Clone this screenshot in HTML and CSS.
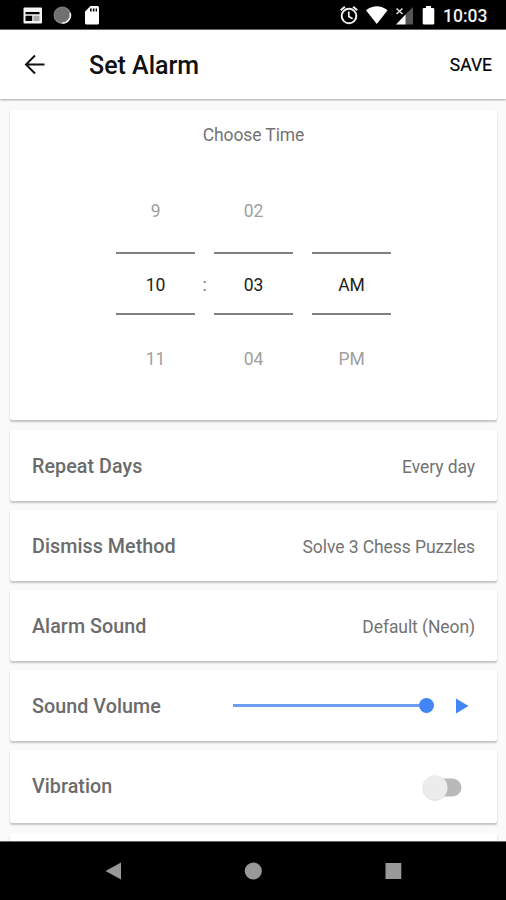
FILE: index.html
```html
<!DOCTYPE html>
<html lang="en">
<head>
<meta charset="utf-8">
<title>Set Alarm</title>
<link rel="stylesheet" href="styles.css">
</head>
<body>
<div class="status">
  <svg class="status-left" width="110" height="30" viewBox="0 0 110 30">
    <path fill="#f4f4f4" fill-rule="evenodd" d="M24.5 7.500H41q1 0 1 1v14q0 1-1 1H24.500q-1 0-1-1V8.500q0-1 1-1zM25.500 12v2.200h14v-2.200zM25.500 15.700v5.300h6.700v-5.300z"/>
    <path fill="#aaa" d="M33.500 15.700h6v5.300h-6z"/>
    <circle cx="62.300" cy="15.200" r="8.700" fill="#888"/>
    <path d="M70.200 13a8 8 0 0 1-8 10" fill="none" stroke="#eee" stroke-width="1.600"/>
    <circle cx="61.800" cy="14.700" r="7.500" fill="#707070"/>
    <path fill="#fff" fill-rule="evenodd" d="M90.500 6H97.500q1.500 0 1.500 1.500v15.500q0 1.500-1.500 1.500H86.500q-1.500 0-1.500-1.500V11.500zM90 8.500V11.500h1.600V8.500zM92.800 8.500V11.500h1.600V8.500zM95.600 8.500V11.500h1.400V8.500z"/>
  </svg>
  <svg class="status-right" width="106" height="30" viewBox="335 0 106 30">
    <g fill="none" stroke="#eee" stroke-width="2">
      <circle cx="349" cy="16" r="7.300"/>
      <path d="M348.800 11.500V16.500l3.800 2.300" stroke-width="1.700"/>
      <path d="M340.700 10.300l4.200-3.600M357.300 10.300l-4.200-3.600"/>
    </g>
    <path fill="#fff" d="M366 10.200Q376.800 2.500 387.600 10.200L376.800 24z"/>
    <path fill="#555" d="M413 7v17.500h-8V15z"/>
    <path fill="#fff" d="M405.500 14.500v10H396z"/>
    <path d="M396.500 8.500l6 5.500M402.500 8.500l-6 5.500" stroke="#ddd" stroke-width="1.600"/>
    <path fill="#fff" d="M426 6h5v2h2q1.300 0 1.300 1.300v13.900q0 1.300-1.300 1.300h-9q-1.300 0-1.300-1.300V9.300Q422.700 8 424 8h2z"/>
  </svg>
  <span class="clock">10:03</span>
</div>
<header class="appbar">
  <svg class="back" width="22" height="22" viewBox="0 0 22 22"><path d="M20.500 10.500H2.500M11 1.500L2 10.500l9 9" fill="none" stroke="#111" stroke-width="2"/></svg>
  <h1 class="title">Set Alarm</h1>
  <span class="save">SAVE</span>
</header>
<main class="content">
  <section class="card time">
    <h2 class="time-title">Choose Time</h2>
    <div class="picker">
      <div class="wheel"><span>9</span><span class="current">10</span><span>11</span></div>
      <div class="colon">:</div>
      <div class="wheel"><span>02</span><span class="current">03</span><span>04</span></div>
      <div class="gap"></div>
      <div class="wheel"><span></span><span class="current">AM</span><span>PM</span></div>
    </div>
  </section>
  <section class="card row"><span class="label">Repeat Days</span><span class="value">Every day</span></section>
  <section class="card row"><span class="label">Dismiss Method</span><span class="value">Solve 3 Chess Puzzles</span></section>
  <section class="card row"><span class="label">Alarm Sound</span><span class="value">Default (Neon)</span></section>
  <section class="card row"><span class="label">Sound Volume</span>
    <div class="volume-control">
      <div class="track"></div><div class="knob"></div>
      <svg class="play" width="13" height="16" viewBox="0 0 13 16"><path d="M0 .5l12.500 7.500L0 15.500z" fill="#4285f4"/></svg>
    </div>
  </section>
  <section class="card row last"><span class="label">Vibration</span>
    <svg class="switch" width="42" height="30" viewBox="0 0 42 30">
      <rect x="8" y="6.500" width="31.500" height="18" rx="9" fill="#b9b9b9"/>
      <circle cx="13" cy="16.200" r="12.500" fill="#ddd"/>
      <circle cx="13" cy="15.500" r="12.200" fill="#ececec"/>
    </svg>
  </section>
  <section class="card row"></section>
</main>
<nav class="nav">
  <svg width="506" height="58" viewBox="0 0 506 58" fill="#999">
    <path d="M105.500 29L121 20.500v17z"/>
    <circle cx="253.300" cy="29" r="8.600"/>
    <rect x="385.500" y="21" width="15.800" height="16"/>
  </svg>
</nav>
</body>
</html>
```
FILE: styles.css
```css
* { box-sizing: border-box; }
body {
  margin: 0;
  width: 506px;
  height: 900px;
  overflow: hidden;
  display: flex;
  flex-direction: column;
  background: #fafafa;
  font-family: Roboto, "Liberation Sans", sans-serif;
  color: #737373;
}
svg { display: block; flex: none; }
h1, h2 { margin: 0; }
.status {
  height: 30px;
  flex: none;
  display: flex;
  align-items: center;
  background: #000;
  border-bottom: 1px solid #666;
}
.status-right { margin-left: 225px; }
.clock {
  margin-left: 2px;
  padding-top: 2px;
  color: #f2f2f2;
  font-size: 17.5px;
  font-weight: 500;
  line-height: 20px;
}
.appbar {
  height: 69px;
  flex: none;
  display: flex;
  align-items: center;
  padding: 0 14px 0 24px;
  background: #fff;
  color: #111;
  box-shadow: 0 1px 2px rgba(0, 0, 0, .35);
}
.title {
  margin-left: 43px;
  padding-top: 2px;
  font-size: 25px;
  font-weight: 500;
  line-height: 32px;
}
.save { margin-left: auto; font-size: 17.5px; font-weight: 400; color: #000; -webkit-text-stroke: .2px #000; }
.content {
  flex: 1;
  min-height: 0;
  overflow: hidden;
  display: flex;
  flex-direction: column;
  gap: 10px;
  padding: 11px 9px 0 10px;
}
.card {
  flex: none;
  background: #fff;
  border-radius: 2px;
  box-shadow: 0 2px 2px rgba(0, 0, 0, .22), 0 0 1px rgba(0, 0, 0, .07);
}
.time { height: 310px; padding-top: 13px; }
.time-title {
  text-align: center;
  font-size: 17.5px;
  letter-spacing: -.1px;
  font-weight: 400;
  line-height: 24px;
}
.picker {
  display: flex;
  justify-content: center;
  margin-top: 27px;
}
.wheel {
  width: 79px;
  display: grid;
  grid-template-rows: 78px 63px 78px;
  text-align: center;
  font-size: 17.5px;
  letter-spacing: -.1px;
  color: #a0a0a0;
}
.wheel span { line-height: 75px; }
.wheel span:last-child { line-height: 89px; }
.wheel .current {
  border-top: 2px solid #808080;
  border-bottom: 2px solid #808080;
  color: #222;
  line-height: 62px;
}
.colon, .gap { width: 19px; text-align: center; font-size: 17.5px; line-height: 223px; }
.row {
  height: 71px;
  margin-bottom: -1px;
  display: flex;
  align-items: center;
  justify-content: space-between;
  padding: 2px 22px 0;
}
.label { font-size: 19.7px; letter-spacing: .06px; font-weight: 500; color: #6b6b6b; }
.value { font-size: 17.5px; letter-spacing: -.08px; }
.volume-control { display: flex; align-items: center; padding: 0 6.5px 2px 0; }
.track { width: 185.5px; height: 3px; background: #6f9df3; }
.knob { width: 15px; height: 15px; border-radius: 50%; background: #4285f4; }
.play { margin-left: 22px; }
.switch { margin-right: 11px; }
.last { height: 73px; margin-bottom: 0; padding: 0 22px; }
.nav { height: 59px; flex: none; background: #000; border-top: 1px solid #666; }
```
